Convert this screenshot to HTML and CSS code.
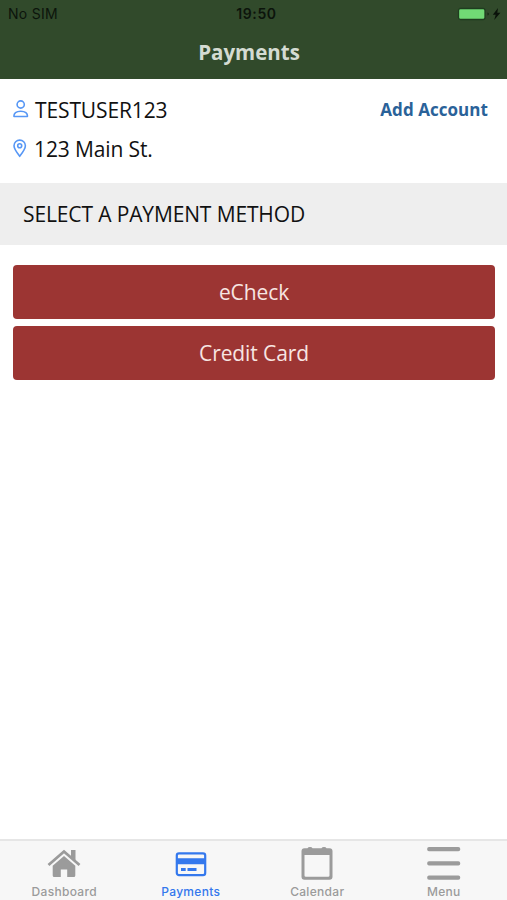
FILE: index.html
```html
<!DOCTYPE html>
<html lang="en">
<head>
<meta charset="utf-8">
<meta name="viewport" content="width=device-width, initial-scale=1">
<title>Payments</title>
<link rel="stylesheet" href="styles.css">
</head>
<body>
<div class="app">
  <header class="header">
    <div class="status">
      <span class="carrier">No SIM</span>
      <span class="clock">19:50</span>
      <svg class="battery" width="45" height="16" viewBox="0 0 45 16">
        <rect x="1.500" y="2.500" width="26.500" height="11" rx="2" fill="#71db75" stroke="#1f3d1f" stroke-width="1.300"/>
        <path d="M30.500 6.500v3q1.300-.3 1.300-1.500t-1.300-1.500z" fill="#132612"/>
        <path d="M41 2l-5.200 6.800h2.900L37.200 14l6.200-7.200h-3.100z" fill="#0a120a"/>
      </svg>
    </div>
    <h1 class="title">Payments</h1>
  </header>
  <main class="content">
    <section class="account">
      <div class="row">
        <svg class="row-icon user" width="16" height="19" viewBox="0 0 16 19" fill="none" stroke="#5797f5" stroke-width="1.600">
          <circle cx="7.700" cy="4.500" r="3.600"/>
          <path d="M1 16.500c-.4-3.300 2.200-5.300 6.700-5.300s7.100 2 6.700 5.300z" stroke-linejoin="round"/>
        </svg>
        <span class="name">TESTUSER123</span>
        <a class="add">Add Account</a>
      </div>
      <div class="row">
        <svg class="row-icon pin" width="14" height="19" viewBox="0 0 14 19" fill="none" stroke="#5797f5" stroke-width="1.600">
          <path d="M6.700 17.300C4.500 14.500 1 10 1 6.800a5.700 5.700 0 0 1 11.400 0C12.400 10 8.900 14.500 6.700 17.300z" stroke-linejoin="round"/>
          <circle cx="6.700" cy="6.800" r="2"/>
        </svg>
        <span class="address">123 Main St.</span>
      </div>
    </section>
    <h2 class="section-title">SELECT A PAYMENT METHOD</h2>
    <div class="methods">
      <button class="method">eCheck</button>
      <button class="method">Credit Card</button>
    </div>
  </main>
  <nav class="tabs">
    <a class="tab">
      <svg class="tab-icon" width="36" height="36" viewBox="0 0 36 36" fill="currentColor">
        <path d="M18 10L29.300 19.800V29.500q0 1.500-1.500 1.500H21.200V23.500h-6.400v7.500H8.200Q6.700 31 6.700 29.500v-9.700z"/>
        <path d="M2.500 19L18 5.500 33.500 19" fill="none" stroke="currentColor" stroke-width="2.800"/>
        <path d="M25 4h4.500v12L25 12z"/>
      </svg>
      <span class="label">Dashboard</span>
    </a>
    <a class="tab active">
      <svg class="tab-icon" width="36" height="36" viewBox="0 0 36 36" fill="currentColor">
        <rect x="3.800" y="7.400" width="28.400" height="21.800" rx="2.200" fill="none" stroke="currentColor" stroke-width="2.200"/>
        <path d="M4 12.200h28v6H4zM8 22h4.700v3H8zM14.500 22h9v3h-9z"/>
      </svg>
      <span class="label">Payments</span>
    </a>
    <a class="tab">
      <svg class="tab-icon" width="36" height="36" viewBox="0 0 36 36" fill="currentColor">
        <path fill-rule="evenodd" d="M5.500 2.300H8.500q.5-1.300 2.500-1.300t2.500 1.300h9q.5-1.300 2.500-1.300t2.500 1.300h3q3 0 3 3v25.500q0 3-3 3h-25q-3 0-3-3V5.300q0-3 3-3zM5.500 9v20.500q0 1.300 1.300 1.300h22.400q1.300 0 1.300-1.300V9z"/>
      </svg>
      <span class="label">Calendar</span>
    </a>
    <a class="tab">
      <svg class="tab-icon" width="36" height="36" viewBox="0 0 36 36" fill="currentColor">
        <rect x="1.200" y="1" width="33" height="4.300" rx="1.800"/>
        <rect x="1.200" y="15.200" width="33" height="4.300" rx="1.800"/>
        <rect x="1.200" y="29.500" width="33" height="4.300" rx="1.800"/>
      </svg>
      <span class="label">Menu</span>
    </a>
  </nav>
</div>
</body>
</html>
```
FILE: styles.css
```css
* { box-sizing: border-box; }

body {
  margin: 0;
  background: #fff;
  color: #111;
  font-family: "Open Sans", sans-serif;
}

.app {
  display: flex;
  flex-direction: column;
  height: 900px;
}

.header {
  height: 79px;
  background: #314a2b;
  flex: none;
}

.status {
  display: grid;
  grid-template-columns: 1fr auto 1fr;
  align-items: center;
  height: 27px;
  padding: 0 5px 0 8px;
  color: #0c140b;
  font-family: Inter, sans-serif;
  font-size: 14px;
  line-height: 27px;
}

.carrier { letter-spacing: 0.3px; }

.clock {
  font-weight: 600;
  letter-spacing: 0.6px;
  margin-left: 3px;
}

.battery { justify-self: end; }

.title {
  margin: 11px 0 0;
  padding-right: 9px;
  color: #d4dbd2;
  font-size: 20.5px;
  line-height: 28px;
  font-weight: 700;
  text-align: center;
}

.content { flex: 1; }

.account {
  height: 104px;
  padding: 11px 19px 0 13px;
}

.row {
  display: flex;
  align-items: center;
  height: 39px;
  font-size: 21px;
  letter-spacing: -0.12px;
}

.user { margin-right: 6px; }
.pin { margin-right: 7px; }

.add {
  margin-left: auto;
  color: #2a6299;
  font-size: 17px;
  font-weight: 700;
  letter-spacing: 0.05px;
}

.section-title {
  margin: 0;
  height: 62px;
  padding-left: 23px;
  background: #eee;
  font-size: 21px;
  letter-spacing: -0.13px;
  line-height: 62px;
  font-weight: 400;
}

.methods {
  display: flex;
  flex-direction: column;
  gap: 7px;
  padding: 20px 12px 0 13px;
}

.method {
  height: 54px;
  padding: 0;
  border: 0;
  border-radius: 4px;
  background: #9c3533;
  color: #f7e5e2;
  font: 400 21px/54px "Open Sans", sans-serif;
  letter-spacing: -0.1px;
}

.tabs {
  display: grid;
  grid-template-columns: repeat(4, 1fr);
  height: 61px;
  flex: none;
  border-top: 2px solid #e6e6e6;
  background: #f7f7f7;
  padding-left: 1px;
}

.tab {
  display: flex;
  flex-direction: column;
  align-items: center;
  padding-top: 5px;
  color: #9b9b9b;
}

.active { color: #3478ed; }

.tab-icon { flex: none; }

.label {
  margin-top: 1px;
  font-family: Inter, sans-serif;
  font-size: 12px;
  line-height: 18px;
  font-weight: 500;
  letter-spacing: 0.3px;
}
```
